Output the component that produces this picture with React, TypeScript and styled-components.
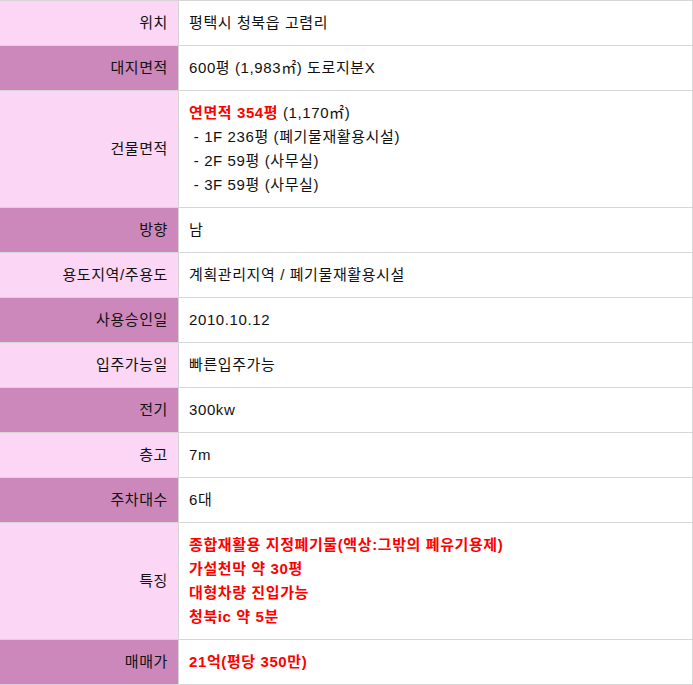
import styled, { createGlobalStyle } from 'styled-components';

const GlobalStyle = createGlobalStyle`
    body {
        margin: 0;
        background: #ffffff;
        font-family: "Liberation Sans", "Noto Sans CJK KR", sans-serif;
    }
`;

const Sheet = styled.div`
    width: 693px;
    display: grid;
    grid-template-columns: 178px 1fr;
    gap: 1px;
    padding: 1px 1px 1px 0;
    box-sizing: border-box;
    background-color: #d6d6d6;
    font-size: 15px;
    letter-spacing: 0.6px;
    color: #111111;
`;

const Label = styled.div<{ $dark: boolean }>`
    background-color: ${({ $dark }) => ($dark ? '#cc88bb' : '#fcd6f5')};
    display: flex;
    align-items: center;
    justify-content: flex-end;
    padding: 10px 10px 10px 0;
    line-height: 24px;
`;

const Value = styled.div`
    background-color: #ffffff;
    padding: 10px;
    line-height: 24px;
    display: flex;
    flex-direction: column;
    justify-content: center;
`;

const Red = styled.span`
    color: #ff0000;
    font-weight: bold;
`;

type RowData = {
    readonly label: string
    readonly value: React.ReactNode
}

const rows: RowData[] = [
    { label: '위치', value: '평택시 청북읍 고렴리' },
    { label: '대지면적', value: '600평 (1,983㎡) 도로지분X' },
    {
        label: '건물면적',
        value: <>
            <div><Red>연면적 354평</Red> (1,170㎡)</div>
            <div>&nbsp;- 1F 236평 (폐기물재활용시설)</div>
            <div>&nbsp;- 2F 59평 (사무실)</div>
            <div>&nbsp;- 3F 59평 (사무실)</div>
        </>
    },
    { label: '방향', value: '남' },
    { label: '용도지역/주용도', value: '계획관리지역 / 폐기물재활용시설' },
    { label: '사용승인일', value: '2010.10.12' },
    { label: '입주가능일', value: '빠른입주가능' },
    { label: '전기', value: '300kw' },
    { label: '층고', value: '7m' },
    { label: '주차대수', value: '6대' },
    {
        label: '특징',
        value: <>
            <Red>종합재활용 지정폐기물(액상:그밖의 폐유기용제)</Red>
            <Red>가설천막 약 30평</Red>
            <Red>대형차량 진입가능</Red>
            <Red>청북ic 약 5분</Red>
        </>
    },
    { label: '매매가', value: <Red>21억(평당 350만)</Red> }
];

const Row = ({ label, dark, children }: { label: string, dark: boolean, children: React.ReactNode }) => (
    <>
        <Label $dark={dark}>{label}</Label>
        <Value>{children}</Value>
    </>
);

export default function App() {
    return (
        <>
            <GlobalStyle />
            <Sheet>
                {rows.map((r, i) => (
                    <Row key={r.label} label={r.label} dark={i % 2 === 1}>{r.value}</Row>
                ))}
            </Sheet>
        </>
    );
}
